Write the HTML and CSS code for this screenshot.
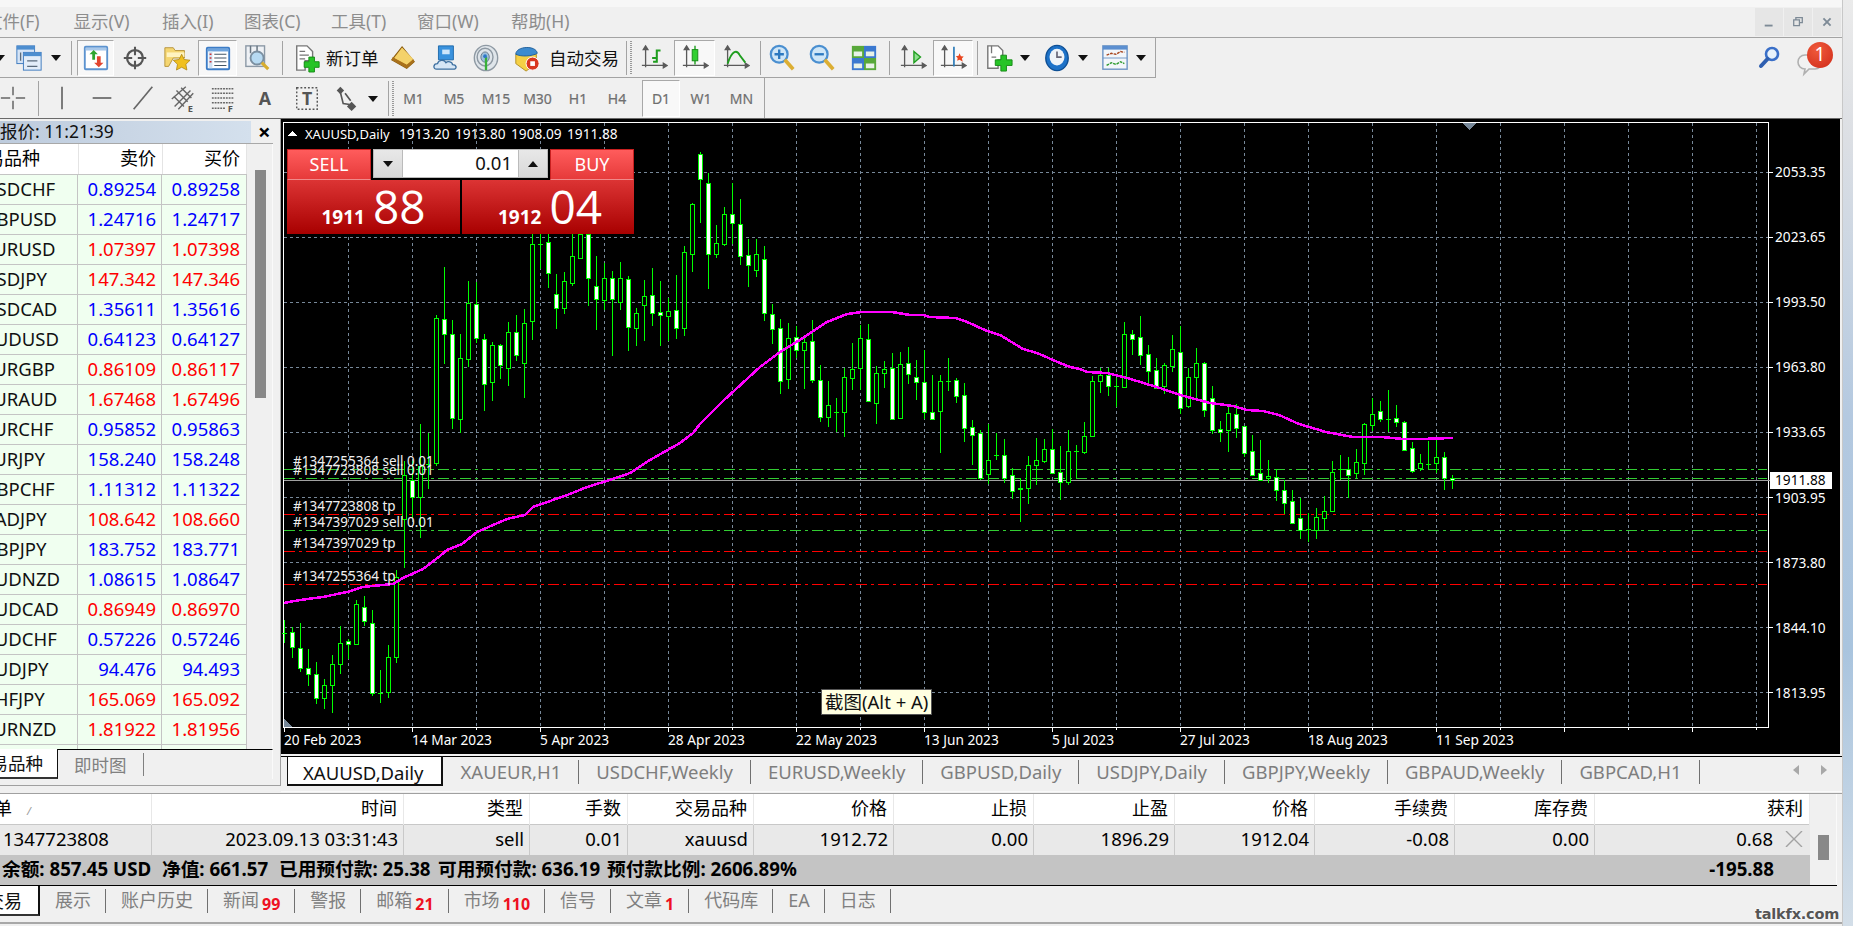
FILE: index.html
```html
<!DOCTYPE html>
<html lang="zh">
<head>
<meta charset="utf-8">
<title>MetaTrader 4</title>
<link rel="stylesheet" href="styles.css">
</head>
<body>
<svg class="defs" width="0" height="0">
  <symbol id="axes" viewBox="0 0 30 30"><path d="M6 4v21M2 23h26M6 2 3.5 6h5zM29 23l-4-2.5v5z" fill="#5a5a5a" stroke="#5a5a5a" stroke-width="1.4"/></symbol>
</svg>
<div class="window">
  <div class="topstrip"></div>
  <div class="menubar">
    <nav class="menu"><span>文件(F)</span><span>显示(V)</span><span>插入(I)</span><span>图表(C)</span><span>工具(T)</span><span>窗口(W)</span><span>帮助(H)</span></nav>
    <div class="winctl">
      <button class="wbtn"><svg width="10" height="10" viewBox="0 0 14 14"><path d="M1 12h11" stroke="#7d8a96" stroke-width="2.600"/></svg></button>
      <button class="wbtn"><svg width="10" height="10" viewBox="0 0 14 14"><path d="M4 4V1h9v7H9M1 4h8v8H1z" fill="none" stroke="#7d8a96" stroke-width="1.800"/></svg></button>
      <button class="wbtn"><svg width="10" height="10" viewBox="0 0 14 14"><path d="M2 2l10 10M12 2 2 12" stroke="#7d8a96" stroke-width="2.600"/></svg></button>
    </div>
  </div>
  <div class="toolrow">
    <div class="tb1">
      <span class="arrow"></span>
      <span class="tool"><svg class="ico" viewBox="0 0 30 30"><rect x="2" y="2" width="19" height="19" fill="#d5e4f6" stroke="#3b78bd"/><rect x="2" y="2" width="19" height="4" fill="#4d8ed0"/><rect x="9" y="9" width="19" height="19" fill="#e3edf9" stroke="#3b78bd"/><rect x="9" y="9" width="19" height="4" fill="#4d8ed0"/><path d="M6 9v9M13 18h11M13 24h11" stroke="#5b6b7c" stroke-width="1.4"/></svg></span>
      <span class="arrow"></span>
      <span class="sep"></span>
      <span class="tool on"><svg class="ico" viewBox="0 0 30 30"><rect x="3" y="3" width="24" height="24" rx="1" fill="#fff" stroke="#5c93cf" stroke-width="2"/><rect x="4" y="4" width="22" height="3" fill="#a8c8ea"/><path d="M11 17V11H8l4.5-4.5L17 11h-3v6z" fill="#2ea52e"/><path d="M16 13v7h-3l5 5 5-5h-3v-7z" fill="#e2452f"/></svg></span>
      <span class="tool"><svg class="ico" viewBox="0 0 30 30"><circle cx="15" cy="15" r="8.5" fill="none" stroke="#555" stroke-width="2.4"/><path d="M15 3v9M15 18v9M3 15h9M18 15h9" stroke="#555" stroke-width="2.2"/></svg></span>
      <span class="tool"><svg class="ico" viewBox="0 0 30 30"><path d="M2 4h9l2 3h10v8H11l-5 9H2z" fill="#f5d671" stroke="#b5923a"/><path d="M4 9h19v5H4z" fill="#fff3c0"/><path d="M20 11l2.7 5.6 6.3.8-4.5 4.3 1.1 6.2-5.6-3-5.6 3 1.1-6.2L11 17.400l6.300-.8z" fill="#f0c020" stroke="#a98212" stroke-width=".8"/></svg></span>
      <span class="tool on"><svg class="ico" viewBox="0 0 30 30"><rect x="3" y="4" width="24" height="23" rx="1" fill="#fff" stroke="#3c7cc6" stroke-width="2"/><rect x="4" y="5" width="22" height="3" fill="#6ea4dd"/><path d="M5 8h4v18H5z" fill="#cfe0f3"/><path d="M6 11h2M6 15h2M6 19h2" stroke="#c33" stroke-width="1.6"/><path d="M11 11h13M11 15h13M11 19h13M11 23h13" stroke="#456" stroke-width="1.2"/></svg></span>
      <span class="tool"><svg class="ico" viewBox="0 0 30 30"><rect x="2" y="2" width="20" height="22" fill="#eef1f5" stroke="#8c99a6" stroke-width="1.5"/><path d="M7 2v8M14 2v6" stroke="#6a7682" stroke-width="1.6"/><circle cx="14" cy="15" r="7" fill="#b7daf2" stroke="#7b8fa0" stroke-width="2"/><path d="M19 20l7 7" stroke="#d8ad2e" stroke-width="3.400"/></svg></span>
      <span class="sep"></span>
      <span class="tool named"><svg class="ico" viewBox="0 0 30 30"><path d="M4 2h11l6 6v10h-8v10H4z" fill="#fff" stroke="#777" stroke-width="1.5"/><path d="M7 8h6M7 12h10M7 16h6" stroke="#777" stroke-width="1.4"/><path d="M17 14h6v5h5v6h-5v5h-6v-5h-5v-6h5z" fill="#27c427" stroke="#148a14"/></svg><span class="tlabel">新订单</span></span>
      <span class="tool"><svg class="ico" viewBox="0 0 30 30"><path d="M14 3 27 19l-8 7L3 17z" fill="#f0c14a" stroke="#8d5f12" stroke-width="1.2"/><path d="M3 17l16 9 8-7-1-3-7 6L4 14z" fill="#a9711c"/><path d="M14 4 6 15l13 7 7-6z" fill="#f4d26a"/></svg></span>
      <span class="tool"><svg class="ico" viewBox="0 0 30 30"><path d="M8 2h16v15H8z" fill="#3a92dd" stroke="#1d69ab"/><path d="M12 6h8v5h-8z" fill="#cfe6fa"/><path d="M6 27c-4 0-4-6 1-6 1-4 7-5 9-1 2-2 7-1 7 2 5 0 5 5 1 5z" fill="#d6e6f5" stroke="#3d6f9f" stroke-width="1.4"/></svg></span>
      <span class="tool"><svg class="ico" viewBox="0 0 30 30"><ellipse cx="15" cy="15" rx="12.500" ry="13.500" fill="#dfe5ea" stroke="#8e99a3" stroke-width="1.500"/><ellipse cx="14" cy="14" rx="8.500" ry="9.500" fill="none" stroke="#8e99a3" stroke-width="1.500"/><ellipse cx="14" cy="14" rx="4.500" ry="5.500" fill="#9fc0dc" stroke="#678" /><path d="M15 14v14" stroke="#38b038" stroke-width="2.500"/><circle cx="14" cy="13" r="2" fill="#2d78c8"/></svg></span>
      <span class="tool named2"><svg class="ico" viewBox="0 0 30 30"><path d="M3 11h22v10l-11 8-11-8z" fill="#f5d045" stroke="#b08d1f"/><path d="M3 11C3 2 25 1 26 10c-5 3-17 4-23 1z" fill="#3d8bcf" stroke="#1f5f9a"/><circle cx="21" cy="21" r="7" fill="#d9361f" stroke="#fff"/><rect x="18.500" y="18.500" width="5" height="5" fill="#fff"/></svg><span class="tlabel">自动交易</span></span>
      <span class="sepgrip"></span>
      <span class="tool"><svg class="ico" viewBox="0 0 30 30"><use href="#axes"/><path d="M14 19h4V7h4M13 15h4" fill="none" stroke="#1f9e1f" stroke-width="2.200"/></svg></span>
      <span class="tool on"><svg class="ico" viewBox="0 0 30 30"><use href="#axes"/><path d="M15 2v20" stroke="#1f9e1f" stroke-width="1.500"/><rect x="12" y="6" width="6" height="12" fill="#2fd02f" stroke="#158a15"/></svg></span>
      <span class="tool"><svg class="ico" viewBox="0 0 30 30"><use href="#axes"/><path d="M6 21C11 6 16 6 19 12l6 8" fill="none" stroke="#1f9e1f" stroke-width="2"/></svg></span>
      <span class="sep"></span>
      <span class="tool"><svg class="ico" viewBox="0 0 30 30"><circle cx="12" cy="11" r="9" fill="#cfe6f7" stroke="#4a8fd0" stroke-width="2.400"/><path d="M7 11h10M12 6v10" stroke="#2b78c0" stroke-width="2.500"/><path d="M18 17l9 10" stroke="#dcae33" stroke-width="4"/></svg></span>
      <span class="tool"><svg class="ico" viewBox="0 0 30 30"><circle cx="12" cy="11" r="9" fill="#cfe6f7" stroke="#4a8fd0" stroke-width="2.400"/><path d="M7 11h10" stroke="#2b78c0" stroke-width="2.500"/><path d="M18 17l9 10" stroke="#dcae33" stroke-width="4"/></svg></span>
      <span class="tool"><svg class="ico" viewBox="0 0 30 30"><rect x="2" y="2" width="13" height="13" fill="#58a83a"/><rect x="15" y="2" width="13" height="13" fill="#3b79d0"/><rect x="2" y="15" width="13" height="13" fill="#3b79d0"/><rect x="15" y="15" width="13" height="13" fill="#58a83a"/><path d="M4 8h9v5H4zM17 8h9v5h-9zM4 21h9v5H4zM17 21h9v5h-9z" fill="#e8f2e8"/></svg></span>
      <span class="sep"></span>
      <span class="tool"><svg class="ico" viewBox="0 0 30 30"><use href="#axes"/><path d="M16 8l7 6-7 6z" fill="#8fe08f" stroke="#1f9e1f" stroke-width="1.500"/></svg></span>
      <span class="tool on"><svg class="ico" viewBox="0 0 30 30"><use href="#axes"/><path d="M16 3v21" stroke="#2a7ab8" stroke-width="1.800"/><path d="M22 10l1.500 3 3 .5-2 2 1 3.500-3.500-2-2.500 1 .5-3-2-2 3-.5z" fill="#e8451e"/></svg></span>
      <span class="sep"></span>
      <span class="tool"><svg class="ico" viewBox="0 0 30 30"><path d="M3 2h11l5 5v10h-5v9H3z" fill="#fff" stroke="#777" stroke-width="1.500"/><path d="M7 2v8M7 14h5" stroke="#777" stroke-width="1.400"/><path d="M17 12h6v5h6v6h-6v6h-6v-6h-6v-6h6z" fill="#27c427" stroke="#148a14"/></svg></span>
      <span class="arrow left"></span>
      <span class="tool"><svg class="ico" viewBox="0 0 30 30"><ellipse cx="15" cy="15" rx="12" ry="13.500" fill="#1d72c8" stroke="#0e4f94" stroke-width="1.500"/><ellipse cx="15" cy="14" rx="8" ry="9" fill="#eef3f8"/><path d="M15 8v6h5" fill="none" stroke="#667" stroke-width="1.800"/></svg></span>
      <span class="arrow left"></span>
      <span class="tool"><svg class="ico" viewBox="0 0 30 30"><rect x="2" y="2" width="26" height="25" fill="#f3f6fa" stroke="#6e95c5" stroke-width="1.500"/><rect x="2" y="2" width="26" height="4" fill="#5c8fd0"/><path d="M2 15h26" stroke="#6e95c5"/><path d="M6 12l5-2 5 1 5-3 4 1" fill="none" stroke="#a8461e" stroke-width="1.500" stroke-dasharray="3 1"/><path d="M6 23l5-3 5 2 5-3 4 2" fill="none" stroke="#2d9a2d" stroke-width="1.500" stroke-dasharray="3 1"/></svg></span>
      <span class="arrow left"></span>
    </div>
    <div class="tray">
      <svg class="search" width="22" height="24" viewBox="0 0 22 24"><circle cx="14" cy="8" r="6" fill="#e8f2fb" stroke="#3a6fc8" stroke-width="2.600"/><path d="M9.500 13 3 20" stroke="#2f5fb0" stroke-width="4" stroke-linecap="round"/></svg>
      <div class="notify">
        <svg width="26" height="24" viewBox="0 0 26 24"><path d="M8 2h10c4 0 7 3 7 7s-3 7-7 7h-6l-5 5 1-5c-4 0-7-3-7-7s3-7 7-7z" fill="#f2f2f2" stroke="#b0b0b0" stroke-width="1.600"/></svg>
        <b class="badge">1</b>
      </div>
    </div>
  </div>
  <div class="tb2">
    <span class="tool"><svg class="ico" viewBox="0 0 30 30"><path d="M15 3v9M15 18v9M2 15h10M18 15h10" stroke="#666" stroke-width="1.600"/></svg></span>
    <span class="sep"></span>
    <span class="tool"><svg class="ico" viewBox="0 0 30 30"><path d="M15 3v24" stroke="#666" stroke-width="1.800"/></svg></span>
    <span class="tool"><svg class="ico" viewBox="0 0 30 30"><path d="M5 15h20" stroke="#666" stroke-width="1.800"/></svg></span>
    <span class="tool"><svg class="ico" viewBox="0 0 30 30"><path d="M5 27 25 3" stroke="#666" stroke-width="1.800"/></svg></span>
    <span class="tool"><svg class="ico" viewBox="0 0 30 30"><path d="M3 16 18 3M6 24 23 7M10 27 26 10M8 7l12 12M5 13l11 11M13 4l11 11" stroke="#666" stroke-width="1.500" fill="none"/><text class="icotxt" x="20" y="30">E</text></svg></span>
    <span class="tool"><svg class="ico" viewBox="0 0 30 30"><path d="M2 5h24M2 10h24M2 15h24M2 20h24M2 26h15" stroke="#666" stroke-width="1.600" stroke-dasharray="2 1"/><text class="icotxt" x="19" y="30">F</text></svg></span>
    <span class="tool"><svg class="ico" viewBox="0 0 30 30"><text class="bigA" x="15" y="23">A</text></svg></span>
    <span class="tool"><svg class="ico" viewBox="0 0 30 30"><rect x="4" y="4" width="22" height="23" fill="none" stroke="#555" stroke-width="1.500" stroke-dasharray="2 2"/><text class="bigA" x="15" y="23">T</text></svg></span>
    <span class="tool"><svg class="ico" viewBox="0 0 30 30"><path d="M9 3l4 4-4 4-4-4z" fill="#555"/><path d="M21 19l5 5-5 5-5-5z" fill="#555"/><path d="M9 9l3 12 7 1M14 10l6 8" stroke="#555" stroke-width="1.800" fill="none"/></svg></span>
    <span class="arrow left"></span>
    <span class="sepgrip"></span>
    <span class="tf">M1</span><span class="tf">M5</span><span class="tf">M15</span><span class="tf">M30</span><span class="tf">H1</span><span class="tf">H4</span>
    <span></span>
    <span class="tf on">D1</span><span class="tf">W1</span><span class="tf">MN</span>
    <span></span>
  </div>
  <main class="workspace">
    <aside class="watch">
      <div class="watch-head">
        <div class="watch-title">市场报价: 11:21:39</div>
        <span class="watch-close">×</span>
      </div>
      <div class="watch-body">
        <div class="quotes">
          <div class="qhead"><span class="sym">交易品种</span><span>卖价</span><span>买价</span></div>
          <div class="qrow"><span class="sym">USDCHF</span><span class="blue">0.89254</span><span class="blue">0.89258</span></div>
          <div class="qrow"><span class="sym">GBPUSD</span><span class="blue">1.24716</span><span class="blue">1.24717</span></div>
          <div class="qrow"><span class="sym">EURUSD</span><span class="red">1.07397</span><span class="red">1.07398</span></div>
          <div class="qrow"><span class="sym">USDJPY</span><span class="red">147.342</span><span class="red">147.346</span></div>
          <div class="qrow"><span class="sym">USDCAD</span><span class="blue">1.35611</span><span class="blue">1.35616</span></div>
          <div class="qrow"><span class="sym">AUDUSD</span><span class="blue">0.64123</span><span class="blue">0.64127</span></div>
          <div class="qrow"><span class="sym">EURGBP</span><span class="red">0.86109</span><span class="red">0.86117</span></div>
          <div class="qrow"><span class="sym">EURAUD</span><span class="red">1.67468</span><span class="red">1.67496</span></div>
          <div class="qrow"><span class="sym">EURCHF</span><span class="blue">0.95852</span><span class="blue">0.95863</span></div>
          <div class="qrow"><span class="sym">EURJPY</span><span class="blue">158.240</span><span class="blue">158.248</span></div>
          <div class="qrow"><span class="sym">GBPCHF</span><span class="blue">1.11312</span><span class="blue">1.11322</span></div>
          <div class="qrow"><span class="sym">CADJPY</span><span class="red">108.642</span><span class="red">108.660</span></div>
          <div class="qrow"><span class="sym">GBPJPY</span><span class="blue">183.752</span><span class="blue">183.771</span></div>
          <div class="qrow"><span class="sym">AUDNZD</span><span class="blue">1.08615</span><span class="blue">1.08647</span></div>
          <div class="qrow"><span class="sym">AUDCAD</span><span class="red">0.86949</span><span class="red">0.86970</span></div>
          <div class="qrow"><span class="sym">AUDCHF</span><span class="blue">0.57226</span><span class="blue">0.57246</span></div>
          <div class="qrow"><span class="sym">AUDJPY</span><span class="blue">94.476</span><span class="blue">94.493</span></div>
          <div class="qrow"><span class="sym">CHFJPY</span><span class="red">165.069</span><span class="red">165.092</span></div>
          <div class="qrow"><span class="sym">EURNZD</span><span class="red">1.81922</span><span class="red">1.81956</span></div>
          <div class="qrow"><span class="sym"></span><span></span><span></span></div>
        </div>
        <div class="watch-scroll"><div class="thumb"></div></div>
      </div>
      <div class="watch-tabs">
        <span class="wtab active">交易品种</span>
        <span class="wtab">即时图</span>
      </div>
    </aside>
    <section class="chartcol">
      <div class="chart">
        <svg class="plot" width="1559" height="635" viewBox="281 118 1559 635">
          <rect x="283.500" y="121.500" width="1485" height="605" fill="none" stroke="#fff"/>
          <path id="grid" class="grid" d=""/>
          <path id="ticks" class="tick" d=""/>
          <path class="order green" d="M284 468.500H1767M284 477.500H1767M284 529.500H1767"/>
          <path class="order red" d="M284 513.500H1767M284 550.500H1767M284 583.500H1767"/>
          <path class="last" d="M284 479.500H1770"/>
          <path id="wicks" class="wick" d=""/>
          <path id="hollow" class="body" d=""/>
          <path id="filled" class="body solid" d=""/>
          <polyline class="ma" points="284,602 300,599 323,596 347,591 363,586 393,583 403,577 423,568 440,555 447,549 462,543 477,531 507,518 525,514 533,506 570,493 587,486 613,478 630,472 650,459 680,442 693,432 700,423 723,400 760,366 780,351 803,337 827,321 847,313 862,311 892,311 910,314 923,314 930,316 955,317 965,320 987,330 1000,334 1023,348 1037,352 1060,362 1070,366 1080,368 1087,371 1107,372 1127,377 1160,387 1180,394 1210,402 1233,405 1247,409 1263,410 1279,414 1299,423 1326,431 1353,436 1381,436 1404,438 1420,438 1453,437"/>
          <path class="corner" d="M284 718l8 8h-8zM1462 122h14l-7 7z"/>
          <path class="hdrup" d="M287 135l5.500-5 5.500 5z"/>
          <text class="cxt" y="138"><tspan class="csym" x="305">XAUUSD,Daily</tspan><tspan x="399">1913.20</tspan><tspan x="455">1913.80</tspan><tspan x="511">1908.09</tspan><tspan x="567">1911.88</tspan></text>
          <g class="olabel">
            <text x="293" y="465">#1347255364 sell 0.01</text>
            <text x="293" y="474">#1347723808 sell 0.01</text>
            <text x="293" y="510">#1347723808 tp</text>
            <text x="293" y="526">#1347397029 sell 0.01</text>
            <text x="293" y="547">#1347397029 tp</text>
            <text x="293" y="580">#1347255364 tp</text>
          </g>
          <g class="cxt">
            <text x="1775" y="176">2053.35</text>
            <text x="1775" y="241">2023.65</text>
            <text x="1775" y="306">1993.50</text>
            <text x="1775" y="371">1963.80</text>
            <text x="1775" y="436">1933.65</text>
            <text x="1775" y="502">1903.95</text>
            <text x="1775" y="567">1873.80</text>
            <text x="1775" y="632">1844.10</text>
            <text x="1775" y="697">1813.95</text>
          </g>
          <rect x="1770" y="471" width="62" height="17" fill="#fff"/>
          <text class="cxt dark" x="1775" y="484">1911.88</text>
          <g class="cxt">
            <text x="284" y="744">20 Feb 2023</text>
            <text x="412" y="744">14 Mar 2023</text>
            <text x="540" y="744">5 Apr 2023</text>
            <text x="668" y="744">28 Apr 2023</text>
            <text x="796" y="744">22 May 2023</text>
            <text x="924" y="744">13 Jun 2023</text>
            <text x="1052" y="744">5 Jul 2023</text>
            <text x="1180" y="744">27 Jul 2023</text>
            <text x="1308" y="744">18 Aug 2023</text>
            <text x="1436" y="744">11 Sep 2023</text>
          </g>
        </svg>
        <div class="trade">
          <div class="trade-top">
            <div class="side">SELL</div>
            <div class="volume">
              <span class="step"><i class="tri down"></i></span>
              <span class="vol">0.01</span>
              <span class="step"><i class="tri up"></i></span>
            </div>
            <div class="side">BUY</div>
          </div>
          <div class="trade-prices">
            <div class="price p-sell"><span class="pfig">1911</span><span class="pbig">88</span></div>
            <div class="price p-buy"><span class="pfig">1912</span><span class="pbig">04</span></div>
          </div>
        </div>
        <div class="tooltip">截图(Alt + A)</div>
      </div>
      <div class="charttabs">
        <span class="ctab active">XAUUSD,Daily</span>
        <span class="ctab">XAUEUR,H1</span>
        <span class="ctab">USDCHF,Weekly</span>
        <span class="ctab">EURUSD,Weekly</span>
        <span class="ctab">GBPUSD,Daily</span>
        <span class="ctab">USDJPY,Daily</span>
        <span class="ctab">GBPJPY,Weekly</span>
        <span class="ctab">GBPAUD,Weekly</span>
        <span class="ctab">GBPCAD,H1</span>
        <span class="tabnav"><i class="navl"></i><i class="navr"></i></span>
      </div>
    </section>
  </main>
  <section class="terminal">
    <div class="tgrid-wrap">
      <div class="tgrid">
        <div class="trow thead">
          <span class="c-order">订单<em class="sort">/</em></span><span>时间</span><span>类型</span><span>手数</span><span>交易品种</span><span>价格</span><span>止损</span><span>止盈</span><span>价格</span><span>手续费</span><span>库存费</span><span>获利</span>
        </div>
        <div class="trow tdata">
          <span class="c-id">1347723808</span><span>2023.09.13 03:31:43</span><span>sell</span><span>0.01</span><span>xauusd</span><span>1912.72</span><span>0.00</span><span>1896.29</span><span>1912.04</span><span>-0.08</span><span>0.00</span>
          <span class="c-profit">0.68<svg class="closex" width="18" height="16" viewBox="0 0 18 16"><path d="M1 0l16 16M17 0 1 16" stroke="#a2a2a2" stroke-width="1.400"/></svg></span>
        </div>
        <div class="tsum">
          <div class="sum-items"><span>余额: 857.45 USD</span><span>净值: 661.57</span><span>已用预付款: 25.38</span><span>可用预付款: 636.19</span><span>预付款比例: 2606.89%</span></div>
          <span class="sum-total">-195.88</span>
        </div>
      </div>
      <div class="tscroll"><div class="tthumb"></div></div>
    </div>
    <div class="bottomtabs">
      <span class="btab active">交易</span>
      <span class="btab">展示</span>
      <span class="btab">账户历史</span>
      <span class="btab">新闻<b>99</b></span>
      <span class="btab">警报</span>
      <span class="btab">邮箱<b>21</b></span>
      <span class="btab">市场<b>110</b></span>
      <span class="btab">信号</span>
      <span class="btab">文章<b>1</b></span>
      <span class="btab">代码库</span>
      <span class="btab">EA</span>
      <span class="btab">日志</span>
    </div>
  </section>
  <div class="status"></div>
</div>
<div class="desktop"></div>
<div class="watermark">talkfx.com</div>
<script src="script.js"></script>
</body>
</html>
```

FILE: styles.css
```css
* { box-sizing: border-box; }
html, body { margin: 0; height: 100%; overflow: hidden; }
body {
  display: flex;
  width: 1853px;
  height: 926px;
  font-family: "Noto Sans", "Noto Sans CJK SC", sans-serif;
  font-size: 18px;
  color: #000;
  background: #f0f0f0;
  position: relative;
}
.defs { position: absolute; }
.window { width: 1842px; height: 926px; flex: none; background: #f0f0f0; display: flex; flex-direction: column; overflow: hidden; }
.desktop { flex: 1; background: linear-gradient(#ebebeb 0, #dcdfe4 15%, #b4c9e0 45%, #a9c4de 70%, #d3dee8 100%); border-left: 1px solid #c8c8c8; }

/* menu */
.topstrip { height: 7px; background: #f7f7f7; flex: none; }
.menubar { height: 31px; flex: none; display: flex; justify-content: space-between; border-bottom: 1px solid #a3a3a3; }
.menu {
  margin-left: -15px;
  display: grid;
  grid-template-columns: 88.5px 88.5px 82px 87px 86px 94px 70px;
  align-items: center;
  font-size: 17.5px;
  color: #8d8d8d;
  white-space: nowrap;
  height: 30px;
  padding-bottom: 4px;
}
.winctl { display: flex; gap: 1px; padding: 1px 1px 1px 0; }
.wbtn { width: 28px; height: 28px; border: 0; padding: 0; background: #e6e6e6; display: flex; align-items: center; justify-content: center; }

/* toolbars */
.toolrow { height: 40px; flex: none; display: flex; justify-content: space-between; }
.tb1 {
  margin-left: -11px;
  display: grid;
  grid-template-columns: 22px 36px 18px 12px 37px 41px 43px 39px 42px 6px 97px 42px 41px 41px 114px 14px 40px 41px 42px 6px 38px 42px 42px 8px 40px 40px 8px 35px 24px 34px 24px 34px 23px;
  height: 40px;
  border-bottom: 1px solid #a3a3a3;
  border-right: 1px solid #a3a3a3;
  align-items: center;
}
.tool { display: flex; align-items: center; justify-content: center; height: 100%; }
.tool.on, .tf.on {
  align-self: stretch;
  margin: 2px 0 1px;
  height: auto;
  background: #f8f8f8;
  border: 1px solid #a8a8a8;
  border-right-color: #fff;
  border-bottom-color: #fff;
}
.ico { width: 28px; height: 28px; display: block; overflow: visible; }
.tool.named { justify-content: flex-start; padding-left: 8px; gap: 5px; }
.tool.named2 { justify-content: flex-start; padding-left: 7px; gap: 8px; }
.tlabel { font-size: 17.5px; color: #111; white-space: nowrap; }
.arrow { justify-self: center; width: 0; height: 0; border-left: 5px solid transparent; border-right: 5px solid transparent; border-top: 6px solid #111; margin-top: 1px; }
.arrow.left { justify-self: start; margin-left: 4px; }
.sep { justify-self: center; align-self: stretch; width: 1px; background: #a3a3a3; margin: 3px 0 2px; }
.sepgrip { align-self: stretch; margin: 3px 0 2px 6px; border-left: 1px solid #a3a3a3; display: flex; }
.sepgrip::after { content: ""; width: 2px; margin-left: 3px; background: repeating-linear-gradient(#999 0 1px, transparent 1px 2px); }
.tb2 {
  margin-left: -8px;
  width: 773px;
  height: 40px;
  flex: none;
  display: grid;
  grid-template-columns: 42px 8px 39px 41px 41px 40px 41px 42px 42px 36px 18px 12px 39px 42px 42px 41px 40px 38px 6px 38px 42px 39px 4px;
  align-items: center;
  border-right: 1px solid #a3a3a3;
}
.tf { display: flex; align-items: center; justify-content: center; font-size: 14px; color: #6f6f6f; height: 100%; -webkit-text-stroke: .2px #6f6f6f; }
.icotxt { font: 700 10px "Noto Sans", sans-serif; fill: #555; }
.bigA { font: 700 19px "Noto Sans", sans-serif; fill: #555; text-anchor: middle; }
.tray { display: flex; align-items: flex-start; }
.search { margin-top: 8px; }
.notify { width: 36px; margin: 10px 9px 0 17px; position: relative; height: 28px; }
.notify svg { position: absolute; left: 0; top: 5px; }
.badge {
  position: absolute; left: 10px; top: -6px;
  width: 26px; height: 26px; border-radius: 50%;
  background: radial-gradient(circle at 40% 30%, #f05a3c, #cf2a18);
  color: #fff; font: 400 19px/25px "Noto Sans", sans-serif; text-align: center;
}

/* workspace */
.workspace { height: 675px; flex: none; display: flex; border-top: 1px solid #6a6a6a; }
.watch { margin-left: -40px; width: 321px; height: 667px; flex: none; padding-top: 2px; display: flex; flex-direction: column; border-right: 1px solid #a0a0a0; border-bottom: 1px solid #a0a0a0; }
.watch-head { height: 23px; flex: none; display: flex; width: 313px; border-bottom: 1px solid #a8a8a8; }
.watch-title { width: 291px; padding-left: 5px; font-size: 17.5px; line-height: 21px; white-space: nowrap; background: linear-gradient(90deg, #bac8da, #d4e0ed); color: #111; height: 22px; }
.watch-close { font: 700 22px/20px "Noto Sans", sans-serif; width: 22px; padding-left: 7px; color: #000; }
.watch-body { height: 605px; flex: none; display: flex; overflow: hidden; width: 313px; border-right: 1px solid #fafafa; }
.quotes { width: 287px; flex: none; background: #f0fff0; }
.qhead, .qrow { display: grid; white-space: nowrap; text-align: right; }
.qhead { grid-template-columns: 119px 84px 84px; height: 31px; background: #fff; line-height: 28px; border-bottom: 1px solid #c4c4c4; }
.qhead span { border-right: 1px solid #e4e4e4; padding-right: 6px; }
.qrow { grid-template-columns: 118px 84px 85px; height: 30px; line-height: 28px; font-size: 18.5px; border-bottom: 1px solid #c4c4c4; }
.qrow span { border-right: 1px solid #c4c4c4; padding-right: 5px; height: 29px; }
.qrow span:last-child { padding-right: 6px; }
.sym { text-align: left; overflow: hidden; }
.qhead .sym { padding-left: 8px; }
.qrow .sym { padding-left: 23px; color: #111; }
.blue { color: #0000ff; }
.red { color: #ff0000; }
.watch-scroll { flex: 1; background: #f0f0f0; padding: 26px 0 0 8px; }
.thumb { width: 11px; height: 228px; background: #888; }
.watch-tabs { display: flex; height: 30px; flex: none; width: 313px; border-top: 1px solid #000; font-size: 17.500px; border-right: 1px solid #fafafa; }
.wtab { padding: 0 16px; color: #808080; line-height: 25px; margin: 3px 0 2px; border-right: 1px solid #808080; white-space: nowrap; height: 23px; }
.wtab.active { background: #fff; color: #111; width: 98px; margin: -1px 0 0; padding: 0 0 0 13px; height: 30px; line-height: 29px; border-right: 1.500px solid #111; border-bottom: 2px solid #333; }

/* chart */
.chartcol { flex: 1; display: flex; flex-direction: column; min-width: 0; }
.chart { height: 635px; width: 1559px; flex: none; background: #000; position: relative; overflow: hidden; }
.plot { display: block; shape-rendering: crispEdges; }
.grid { stroke: #778899; stroke-dasharray: 3 3; fill: none; }
.tick { stroke: #fff; fill: none; }
.order { fill: none; stroke-dasharray: 11 4 3 4; }
.order.green { stroke: #32cd32; }
.order.red { stroke: #ff0000; }
.last { stroke: #a0a0a0; fill: none; }
.wick { stroke: #00ff00; fill: none; }
.body { stroke: #00ff00; fill: #000; }
.body.solid { fill: #fff; }
.ma { fill: none; stroke: #ff00ff; stroke-width: 2.5; }
.corner { fill: #778899; }
.hdrup { fill: #fff; }
.cxt, .cxt text { font-family: "Noto Sans", sans-serif; font-size: 13.7px; fill: #fff; shape-rendering: auto; }
.cxt.dark { fill: #000; }
.csym { font-size: 13px; }
.olabel text { font-family: "Noto Sans", sans-serif; font-size: 13.5px; fill: #f0f0f0; }

/* one-click trade overlay */
.trade { position: absolute; left: 6px; top: 30px; width: 347px; height: 85px; background: #000; color: #fff; display: flex; flex-direction: column; }
.trade-top { height: 31px; display: flex; justify-content: space-between; flex: none; }
.side { width: 84px; text-align: center; font-size: 18px; line-height: 29px; background: linear-gradient(#ff5c5c, #e63a3a); border: 1px solid #c82020; border-bottom: 1px solid #f08a8a; }
.volume { width: 175px; height: 29px; display: flex; background: #e2e2e2; border: 1px solid #bbb; }
.step { width: 28px; display: flex; align-items: center; justify-content: center; background: linear-gradient(#e8e8e8, #d8d8d8); }
.tri { width: 0; height: 0; border-left: 5px solid transparent; border-right: 5px solid transparent; }
.tri.down { border-top: 6px solid #111; }
.tri.up { border-bottom: 6px solid #111; }
.vol { flex: 1; background: #fff; color: #111; text-align: right; padding-right: 6px; font-size: 18.5px; line-height: 25px; border: 1px solid #bbb; border-width: 0 1px; }
.trade-prices { display: flex; justify-content: space-between; flex: 1; }
.price { width: 172.500px; display: flex; justify-content: flex-end; align-items: baseline; gap: 8px; background: linear-gradient(#dc3434, #a80000); white-space: nowrap; }
.p-sell { padding-right: 34px; }
.p-buy { padding-right: 32px; }
.pfig { font: 700 19px "Noto Sans", sans-serif; }
.pbig { font: 400 46px/52px "Open Sans", sans-serif; }
.tooltip { position: absolute; left: 540px; top: 570px; background: #ffffe1; border: 1px solid #555; color: #111; font-size: 18.5px; line-height: 24px; padding: 0 3px; height: 26px; white-space: nowrap; }
.charttabs { height: 36px; flex: none; margin-top: 2px; padding-left: 6px; display: flex; background: #f0f0f0; border-top: 1px solid #000; border-bottom: 1px solid #fafafa; position: relative; margin-bottom: 0; }
.ctab { padding: 0 17px; color: #7e7e7e; height: 24px; margin-top: 3px; line-height: 23px; font-size: 18.5px; border-right: 1px solid #707070; white-space: nowrap; }
.ctab.active { color: #111; background: #fff; margin: -1px 0 0; height: 30px; line-height: 31px; padding: 0 18px 0 15px; border: 1px solid #111; border-top-color: #000; border-bottom-width: 2px; border-right-width: 2px; }
.tabnav { margin-left: auto; margin-right: 15px; display: flex; gap: 22px; padding-top: 8px; }
.navl, .navr { width: 0; height: 0; border-top: 5px solid transparent; border-bottom: 5px solid transparent; }
.navl { border-right: 6px solid #a8a8a8; }
.navr { border-left: 6px solid #a8a8a8; }

/* terminal */
.terminal { flex: none; border-top: 1px solid #a0a0a0; margin-top: 0; }
.tgrid-wrap { display: flex; width: 1837px; border-bottom: 1px solid #000; height: 92px; }
.tgrid { width: 1810px; flex: none; }
.trow { display: grid; grid-template-columns: 152px 252px 126px 98px 126px 140px 140px 141px 140px 140px 140px 215px; text-align: right; white-space: nowrap; }
.thead { height: 31px; background: #fff; line-height: 28px; border-bottom: 1px solid #c8c8c8; }
.thead span { border-right: 1px solid #e8e8e8; padding-right: 6px; }
.thead .c-order { text-align: left; text-indent: -24px; padding: 0; }
.sort { font-size: 11px; color: #999; font-style: italic; margin-left: 15px; }
.tdata { height: 30px; background: #e9e9e9; font-size: 18.5px; line-height: 28px; }
.tdata span { border-right: 1px solid #c9c9c9; padding-right: 5px; height: 30px; }
.tdata .c-id { text-align: left; padding: 0 0 0 3px; }
.tdata .c-profit { border: 0; display: flex; justify-content: flex-end; align-items: center; gap: 12px; padding-right: 7px; height: 28px; }
.tsum { height: 30px; background: #c4c4c4; display: flex; justify-content: space-between; font-weight: 700; font-size: 18.7px; line-height: 28px; white-space: nowrap; padding: 0 36px 0 2px; }
.sum-items { display: grid; grid-template-columns: 160px 117px 159px 169px auto; }
.tscroll { flex: 1; padding: 41px 0 0 8px; border-right: 1px solid #fafafa; }
.tthumb { width: 11px; height: 25px; background: #888; }
.bottomtabs { display: flex; height: 30px; background: #f0f0f0; }
.btab { padding: 0 14px 0 15px; height: 24px; margin-top: 3px; line-height: 23px; color: #808080; border-right: 1px solid #707070; white-space: nowrap; font-size: 18px; }
.btab b { color: #ee1122; font: 700 16px "Noto Sans", sans-serif; margin-left: 3px; position: relative; top: 3px; }
.btab.active { margin-top: 0; height: 30px; line-height: 30px; color: #111; background: #fff; margin-left: -18px; padding: 0 0 0 4px; width: 58px; border-right: 2px solid #111; border-bottom: 2px solid #333; }
.status { margin-top: 6px; border-top: 2px solid #a8a8a8; flex: 1; }
.watermark { position: absolute; left: 1755px; top: 906px; font: 700 14.500px "DejaVu Sans", sans-serif; color: #555; text-shadow: 0 0 2px #fff, 0 0 2px #fff; white-space: nowrap; letter-spacing: -.2px; }
```

FILE: script.js
```js
// [wick top, wick bottom, body top, body bottom, kind]  0 hollow, 1 filled, 2 doji
var c = [
[619,642,632,632,2],[626,657,631,646,1],[622,671,647,667,1],[648,685,667,673,1],[661,703,673,697,1],[678,708,684,697,0],[654,712,663,684,0],[625,673,642,663,0],[638,658,640,643,1],[599,643,603,643,0],
[595,625,606,620,1],[609,695,622,692,1],[669,702,692,692,2],[644,697,656,691,0],[569,662,576,656,0],[460,567,474,518,0],[460,517,479,496,1],[423,537,465,496,0],[432,488,463,463,2],[314,465,317,462,0],
[266,363,318,333,1],[319,428,333,417,1],[333,432,357,418,0],[280,366,302,358,0],[281,342,303,337,1],[333,410,338,383,1],[341,400,344,381,0],[343,378,344,364,1],[321,385,331,367,0],[314,360,331,354,1],
[308,397,322,362,0],[232,339,243,320,0],[232,268,243,243,2],[232,287,241,272,1],[273,328,293,307,1],[271,313,280,307,0],[232,285,255,282,0],[232,257,233,257,0],[232,305,233,277,1],[255,329,285,298,1],
[262,309,277,299,0],[270,355,277,298,1],[261,309,277,301,0],[275,350,278,326,1],[307,345,312,327,0],[279,340,295,304,0],[267,325,294,312,1],[280,345,311,314,1],[297,340,310,315,0],[274,338,309,327,1],
[245,335,251,327,0],[202,271,203,253,0],[151,222,153,178,1],[172,288,182,253,1],[224,257,242,253,0],[206,245,213,243,0],[182,243,213,222,1],[198,264,223,255,1],[238,286,254,264,1],[238,276,253,269,0],
[245,320,258,312,1],[303,343,313,328,1],[318,393,327,380,1],[322,388,337,378,0],[325,357,336,349,1],[337,388,341,349,0],[319,382,340,379,1],[364,421,379,416,1],[380,426,404,416,0],[397,431,411,411,2],
[367,436,376,411,0],[342,389,368,377,0],[324,389,337,367,0],[323,401,338,400,1],[365,423,372,402,0],[360,387,368,372,0],[352,418,367,418,1],[351,417,363,417,0],[346,383,362,373,1],[359,399,376,381,1],
[349,418,381,411,1],[374,418,411,418,1],[374,452,380,410,0],[357,390,380,380,2],[377,402,379,395,1],[382,441,394,427,1],[419,464,426,434,1],[429,479,432,477,1],[423,483,459,473,0],[432,459,454,454,2],
[438,482,454,477,1],[467,498,474,490,1],[477,521,487,488,1],[455,503,464,487,0],[437,484,459,464,0],[438,462,448,460,0],[428,472,448,472,1],[445,499,471,481,1],[429,484,450,481,0],[444,477,450,450,2],
[421,453,435,451,0],[375,435,380,435,0],[367,392,374,380,0],[367,395,374,385,1],[377,406,385,385,2],[321,387,333,386,0],[329,354,333,338,1],[315,364,336,354,1],[344,382,353,370,1],[357,388,369,387,1],
[362,393,364,385,0],[334,371,348,365,0],[325,413,351,407,1],[367,407,376,405,0],[347,397,362,376,0],[361,416,362,409,1],[385,433,397,429,1],[420,441,428,431,1],[406,451,412,429,0],[403,437,413,427,1],
[425,456,425,452,1],[434,475,450,474,1],[439,480,472,479,1],[459,482,475,477,0],[468,500,476,489,1],[479,513,489,502,1],[489,523,500,522,1],[497,538,517,529,1],[512,541,528,528,2],[507,538,516,529,0],
[495,529,510,517,0],[460,511,471,510,0],[454,479,468,468,2],[456,497,468,474,1],[448,477,461,472,0],[422,474,423,462,0],[397,430,413,424,0],[400,421,410,418,1],[389,431,418,418,2],[404,426,417,421,1],
[420,450,421,449,1],[441,472,447,470,1],[453,470,462,467,0],[440,468,463,464,2],[439,472,456,462,0],[451,489,456,477,1],[474,488,477,479,1]
];
var wicks = "", hollow = "", filled = "", i, x, d;
for (i = 0; i < c.length; i++) {
  d = c[i];
  x = 284 + 8 * i;
  wicks += "M" + (x + .5) + " " + d[0] + "V" + d[1];
  if (d[4] === 2) {
    wicks += "M" + (x - 2) + " " + (d[2] + .5) + "h5";
  } else {
    var body = "M" + (x - 1.5) + " " + (d[2] + .5) + "h4v" + (d[3] - d[2]) + "h-4z";
    if (d[4] === 1) filled += body; else hollow += body;
  }
}
document.getElementById("wicks").setAttribute("d", wicks);
document.getElementById("hollow").setAttribute("d", hollow);
document.getElementById("filled").setAttribute("d", filled);

var grid = "", ticks = "", k;
for (k = 0; k < 9; k++) {
  grid += "M284 " + (171.5 + 65 * k) + "H1768";
  ticks += "M1769 " + (171.5 + 65 * k) + "h4";
}
for (k = 1; k < 24; k++) grid += "M" + (284.5 + 64 * k) + " 122V726";
for (k = 0; k < 24; k++) ticks += "M" + (284.5 + 64 * k) + " 727v" + (k % 2 ? 2 : 4);
document.getElementById("grid").setAttribute("d", grid);
document.getElementById("ticks").setAttribute("d", ticks);
```
